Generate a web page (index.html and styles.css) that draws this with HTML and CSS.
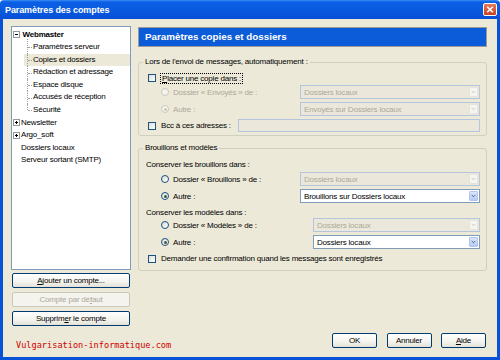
FILE: index.html
```html
<!DOCTYPE html>
<html>
<head>
    <meta charset="utf-8">
    <link rel="stylesheet" href="styles.css">
</head>
<body>
    <div class="window">
        <div class="titlebar">
            <span class="title">Paramètres des comptes</span>
            <span class="close">
                <svg viewBox="0 0 12 11"><path d="M3.2 2.7l5.6 5.6M8.8 2.7l-5.6 5.6" stroke="#fff" stroke-width="1.6"/></svg>
            </span>
        </div>

        <div class="frame">
            <div class="sidebar">
                <div class="tree">
                    <div class="node open"><span class="expander minus"></span><b>Webmaster</b></div>
                    <div class="child">Paramètres serveur</div>
                    <div class="child selected">Copies et dossiers</div>
                    <div class="child">Rédaction et adressage</div>
                    <div class="child">Espace disque</div>
                    <div class="child">Accusés de réception</div>
                    <div class="child last">Sécurité</div>
                    <div class="node"><span class="expander plus"></span>Newsletter</div>
                    <div class="node"><span class="expander plus"></span>Argo_soft</div>
                    <div class="node leaf">Dossiers locaux</div>
                    <div class="node leaf">Serveur sortant (SMTP)</div>
                </div>
                <button class="btn side-btn"><u>A</u>jouter un compte...</button>
                <button class="btn side-btn" disabled>Compte par dé<u>f</u>aut</button>
                <button class="btn side-btn">Supprim<u>e</u>r le compte</button>
                <div class="brand">Vulgarisation-informatique.com</div>
            </div>

            <div class="main">
                <div class="page-header">Paramètres copies et dossiers</div>

                <fieldset class="group group-send">
                    <legend>Lors de l'envoi de messages, automatiquement :</legend>
                    <div class="row check-row first">
                        <span class="checkbox"></span>
                        <span class="focus"><u>P</u>lacer une copie dans :</span>
                    </div>
                    <div class="row radio-row off flush">
                        <span class="radio"></span>
                        <span class="label">Dossier « Envoyés » de :</span>
                        <div class="select wide off"><span class="value">Dossiers locaux</span><span class="drop"><svg viewBox="0 0 9 11"><path d="M2 4l2.5 2.5L7 4" fill="none" stroke="currentColor" stroke-width="1.3"/></svg></span></div>
                    </div>
                    <div class="row radio-row off">
                        <span class="radio checked"></span>
                        <span class="label">Autre :</span>
                        <div class="select wide off"><span class="value">Envoyés sur Dossiers locaux</span><span class="drop"><svg viewBox="0 0 9 11"><path d="M2 4l2.5 2.5L7 4" fill="none" stroke="currentColor" stroke-width="1.3"/></svg></span></div>
                    </div>
                    <div class="row check-row bcc">
                        <span class="checkbox"></span>
                        <span class="label">Bcc à ces adresses :</span>
                        <div class="textbox off"></div>
                    </div>
                </fieldset>

                <fieldset class="group group-drafts">
                    <legend>Brouillons et modèles</legend>
                    <div class="row text-row">Conserver les brouillons dans :</div>
                    <div class="row radio-row tight">
                        <span class="radio"></span>
                        <span class="label">Dossier « Brouillons » de :</span>
                        <div class="select wide off"><span class="value">Dossiers locaux</span><span class="drop"><svg viewBox="0 0 9 11"><path d="M2 4l2.5 2.5L7 4" fill="none" stroke="currentColor" stroke-width="1.3"/></svg></span></div>
                    </div>
                    <div class="row radio-row">
                        <span class="radio checked"></span>
                        <span class="label">Autre :</span>
                        <div class="select wide"><span class="value">Brouillons sur Dossiers locaux</span><span class="drop"><svg viewBox="0 0 9 11"><path d="M2 4l2.5 2.5L7 4" fill="none" stroke="currentColor" stroke-width="1.3"/></svg></span></div>
                    </div>
                    <div class="row text-row">Conserver les modèles dans :</div>
                    <div class="row radio-row flush">
                        <span class="radio"></span>
                        <span class="label">Dossier « Modèles » de :</span>
                        <div class="select narrow off"><span class="value">Dossiers locaux</span><span class="drop"><svg viewBox="0 0 9 11"><path d="M2 4l2.5 2.5L7 4" fill="none" stroke="currentColor" stroke-width="1.3"/></svg></span></div>
                    </div>
                    <div class="row radio-row">
                        <span class="radio checked"></span>
                        <span class="label">Autre :</span>
                        <div class="select narrow"><span class="value">Dossiers locaux</span><span class="drop"><svg viewBox="0 0 9 11"><path d="M2 4l2.5 2.5L7 4" fill="none" stroke="currentColor" stroke-width="1.3"/></svg></span></div>
                    </div>
                    <div class="row check-row confirm">
                        <span class="checkbox"></span>
                        <span class="label">Demander une confirmation quand les messages sont enregistrés</span>
                    </div>
                </fieldset>

                <div class="actions">
                    <button class="btn action-btn">OK</button>
                    <button class="btn action-btn">Annuler</button>
                    <button class="btn action-btn"><u>A</u>ide</button>
                </div>
            </div>
        </div>
    </div>
</body>
</html>
```

FILE: styles.css
```css
* {
    box-sizing: border-box;
}

body {
    margin: 0;
    width: 500px;
    height: 360px;
    overflow: hidden;
    font-family: 'Liberation Sans', Arial, sans-serif;
    font-size: 8px;
    letter-spacing: -0.2px;
    color: #000;
    background: #fff;
}

u {
    text-decoration: underline;
    text-underline-offset: 1px;
}

.window {
    width: 500px;
    height: 360px;
    display: flex;
    flex-direction: column;
}

/* title bar */
.titlebar {
    flex: none;
    height: 19px;
    display: flex;
    align-items: center;
    justify-content: space-between;
    padding: 0 3px 0 5px;
    background: linear-gradient(#3d8ef6 0, #0b5fe4 2px, #0a5ae0 10px, #0650d6 100%);
    border-radius: 4px 4px 0 0;
}

.title {
    color: #fff;
    font-weight: bold;
    font-size: 9px;
    letter-spacing: -0.1px;
}

.close {
    width: 14px;
    height: 13px;
    border: 1px solid #fff;
    border-radius: 2px;
    background: linear-gradient(#e77a5c, #c9401f);
    display: flex;
}

.close svg {
    width: 12px;
    height: 11px;
}

/* body */
.frame {
    flex: 1;
    min-height: 0;
    display: flex;
    gap: 7px;
    padding: 7px 10px 0 8px;
    background: #ece9d8;
    border: 3px solid #0753d8;
    border-top: 0;
}

.sidebar {
    width: 120px;
    display: flex;
    flex-direction: column;
}

.tree {
    height: 244px;
    flex: none;
    border: 1px solid #7f9db9;
    background: #fff;
    padding-top: 1.5px;
}

.node,
.child {
    position: relative;
    height: 12.6px;
    line-height: 12.6px;
    white-space: nowrap;
}

.node {
    display: flex;
    align-items: center;
    padding-left: 1px;
}

.node.open::after {
    content: '';
    position: absolute;
    left: 15px;
    top: 10px;
    height: 3px;
    border-left: 1px dotted #a0a0a0;
}

.node b {
    margin-left: 1.5px;
}

.node.leaf {
    padding-left: 9px;
}

.expander {
    position: relative;
    width: 7px;
    height: 7px;
    border: 1px solid #919b9c;
    background: #fff;
    margin-right: 1px;
}

.expander::before,
.expander::after {
    content: '';
    position: absolute;
    background: #000;
}

.expander::before {
    left: 1px;
    top: 2px;
    width: 3px;
    height: 1px;
}

.expander.plus::after {
    left: 2px;
    top: 1px;
    width: 1px;
    height: 3px;
}

.expander.minus::after {
    display: none;
}

.child {
    margin-left: 12px;
    padding-left: 9px;
}

.child::before {
    content: '';
    position: absolute;
    left: 3px;
    top: 0;
    height: 100%;
    border-left: 1px dotted #a0a0a0;
}

.child.last::before {
    height: 50%;
}

.child::after {
    content: '';
    position: absolute;
    left: 4px;
    top: 50%;
    width: 4px;
    border-top: 1px dotted #a0a0a0;
}

.child.selected {
    background: #ece9d8;
}

/* buttons */
.btn {
    font-family: inherit;
    font-size: 8px;
    letter-spacing: -0.2px;
    color: #000;
    height: 15px;
    flex: none;
    padding: 0;
    border: 1px solid #003c74;
    border-radius: 2px;
    background: linear-gradient(#fff 0, #f4f3ee 60%, #e3e1d6 100%);
    cursor: pointer;
}

.btn:disabled {
    color: #aca899;
    border-color: #c9c7ba;
    background: #f4f3ee;
}

.side-btn {
    width: 118px;
    margin: 4px 0 0 1px;
}

.side-btn:first-of-type {
    margin-top: 3px;
}

.brand {
    margin: 14px 0 0 5px;
    font-family: 'DejaVu Sans Mono', 'Liberation Mono', monospace;
    font-size: 8.6px;
    letter-spacing: 0;
    line-height: 10px;
    white-space: nowrap;
    color: #d00000;
}

/* main pane */
.main {
    width: 349px;
    display: flex;
    flex-direction: column;
}

.page-header {
    margin-top: 1px;
    height: 20px;
    line-height: 18px;
    padding-left: 6px;
    border: 1px solid #9c9a94;
    background: #0c5bd8;
    color: #fff;
    font-weight: bold;
    font-size: 9.8px;
    letter-spacing: 0;
}

.group {
    margin: 10px 0 0;
    padding: 4px 6px 3px 7px;
    border: 1px solid #d0d0bf;
    border-radius: 3px;
    min-width: 0;
}

.group legend {
    margin-left: -3px;
    padding: 0 2px;
    line-height: 10px;
}

.group-drafts {
    margin-top: 7px;
    padding-top: 5px;
    padding-bottom: 5px;
}

.row {
    display: flex;
    align-items: center;
    height: 14px;
    white-space: nowrap;
}

.check-row {
    margin-left: 2px;
}

.check-row.bcc,
.check-row.confirm {
    height: 13px;
    margin-top: 3px;
}

.radio-row {
    padding-left: 15px;
    margin-top: 3px;
}

.radio-row.tight {
    margin-top: 2px;
}

.radio-row.flush {
    margin-top: 0;
}

.text-row {
    height: 12px;
}

.radio-row + .text-row {
    margin-top: 3px;
}

.checkbox {
    width: 8px;
    height: 8px;
    flex: none;
    border: 1px solid #1c5180;
    background: linear-gradient(135deg, #dcdcd7, #fff);
    margin-right: 5px;
}

.radio {
    position: relative;
    width: 8px;
    height: 8px;
    flex: none;
    border: 1px solid #1c5180;
    border-radius: 50%;
    background: linear-gradient(135deg, #dcdcd7, #fff);
    margin-right: 4px;
}

.radio.checked::after {
    content: '';
    position: absolute;
    left: 1.5px;
    top: 1.5px;
    width: 3px;
    height: 3px;
    border-radius: 50%;
    background: #3e5a3e;
}

.off .radio {
    border-color: #cac8bb;
    background: #f4f3ee;
}

.off .radio.checked::after {
    background: #cac8bb;
}

.off .label {
    color: #aca899;
}

.focus {
    outline: 1px dotted #000;
    outline-offset: 0;
    padding: 0 1px;
    line-height: 9px;
}

/* combo boxes */
.select {
    margin-left: auto;
    height: 14px;
    display: flex;
    align-items: center;
    justify-content: space-between;
    border: 1px solid #7f9db9;
    background: #fff;
    padding: 0 1px 0 3px;
}

.select.wide {
    width: 180px;
}

.select.narrow {
    width: 167px;
}

.drop {
    width: 9px;
    height: 10px;
    display: flex;
    border: 1px solid #b1c4ef;
    border-radius: 1px;
    background: linear-gradient(#dbe5fb, #b7caf5);
    color: #4d6185;
}

.drop svg {
    width: 7px;
    height: 8px;
}

.select.off {
    border-color: #b5c5de;
    background: #ebe8db;
    color: #aca899;
}

.select.off .drop {
    border-color: #e6e4da;
    background: #f6f5f0;
    color: #c9c7ba;
}

.textbox {
    margin-left: auto;
    width: 242px;
    height: 13px;
    border: 1px solid #b5c5de;
    background: #ebe8db;
}

/* dialog buttons */
.actions {
    margin-top: auto;
    margin-bottom: 9px;
    display: flex;
    justify-content: flex-end;
    gap: 9.5px;
    padding-right: 1px;
}

.action-btn {
    width: 45px;
}
```
